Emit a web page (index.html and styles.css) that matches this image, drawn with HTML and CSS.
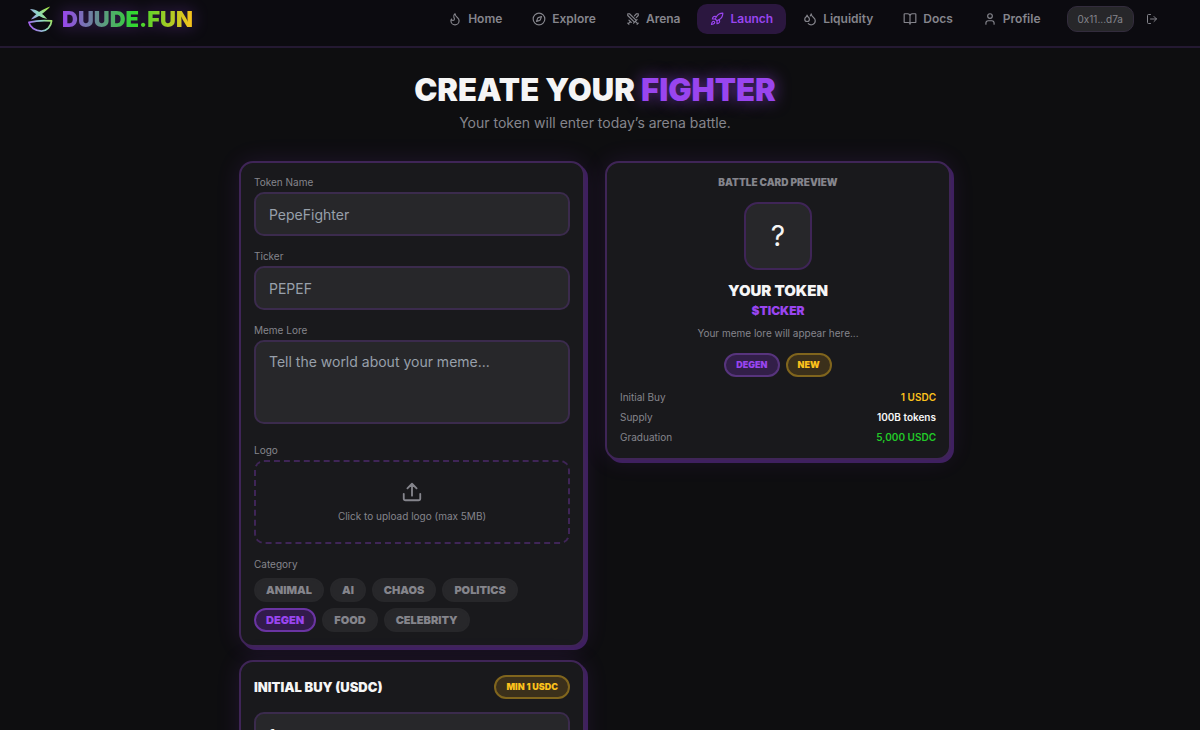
FILE: index.html
```html
<!DOCTYPE html>
<html lang="en">
<head>
  <meta charset="UTF-8">
  <meta name="viewport" content="width=device-width, initial-scale=1.0">
  <title>DUUDE.FUN - Launch</title>
  <link rel="stylesheet" href="styles.css">
</head>
<body>

<header class="header">
  <a href="#" class="logo">
    <svg class="logo-mark" viewBox="0 0 28 28">
      <defs>
        <linearGradient id="logoGradient" gradientUnits="userSpaceOnUse" x1="2" y1="20" x2="26" y2="8">
          <stop offset="0" stop-color="#a65cf0"/>
          <stop offset="0.5" stop-color="#8fd8c8"/>
          <stop offset="1" stop-color="#a6e83c"/>
        </linearGradient>
      </defs>
      <g fill="url(#logoGradient)">
        <path d="M3 3.500C10 3.500 16 8 21 14C15 12.500 8 9 3 3.500Z"/>
        <path d="M24 1C20 6 11 13 4 14.500C9 8 17 3.500 24 1Z"/>
      </g>
      <path d="M2 17.500C10 15.500 18 15.200 25.500 16C25 22 20.500 26.300 15 26.500C8.500 26.500 3 22.500 2 17.500Z" fill="none" stroke="url(#logoGradient)" stroke-width="1.800" stroke-linejoin="round"/>
    </svg>
    <span class="logo-text">DUUDE.FUN</span>
  </a>

  <nav class="nav">
    <a href="#" class="nav-link">
      <svg class="icon" viewBox="0 0 24 24"><path d="M8.500 14.500A2.500 2.500 0 0 0 11 12c0-1.380-.5-2-1-3-1.072-2.143-.224-4.054 2-6 .5 2.500 2 4.900 4 6.500 2 1.600 3 3.500 3 5.500a7 7 0 1 1-14 0c0-1.153.433-2.294 1-3a2.500 2.500 0 0 0 2.500 2.500z"/></svg>
      Home
    </a>
    <a href="#" class="nav-link">
      <svg class="icon" viewBox="0 0 24 24"><circle cx="12" cy="12" r="10"/><path d="m16.240 7.760-1.804 5.411a2 2 0 0 1-1.265 1.265L7.760 16.240l1.804-5.411a2 2 0 0 1 1.265-1.265z"/></svg>
      Explore
    </a>
    <a href="#" class="nav-link">
      <svg class="icon" viewBox="0 0 24 24"><path d="M14.500 17.500 3 6V3h3l11.500 11.500M13 19l6-6M16 16l4 4M19 21l2-2M14.500 6.500 18 3h3v3l-3.500 3.500M5 14l4 4M7 17l-3 3M3 19l2 2"/></svg>
      Arena
    </a>
    <a href="#" class="nav-link active">
      <svg class="icon" viewBox="0 0 24 24"><path d="M4.500 16.500c-1.500 1.260-2 5-2 5s3.740-.5 5-2c.71-.84.7-2.130-.09-2.910a2.180 2.180 0 0 0-2.910-.09z"/><path d="m12 15-3-3a22 22 0 0 1 2-3.950A12.880 12.880 0 0 1 22 2c0 2.720-.78 7.500-6 11a22.350 22.350 0 0 1-4 2z"/><path d="M9 12H4s.55-3.030 2-4c1.620-1.080 5 0 5 0M12 15v5s3.030-.55 4-2c1.080-1.620 0-5 0-5"/></svg>
      Launch
    </a>
    <a href="#" class="nav-link">
      <svg class="icon" viewBox="0 0 24 24"><path d="M7 16.300c2.200 0 4-1.830 4-4.050 0-1.160-.57-2.260-1.710-3.190S7.290 6.750 7 5.300c-.29 1.450-1.140 2.840-2.290 3.760S3 11.100 3 12.250c0 2.220 1.800 4.050 4 4.050z"/><path d="M12.560 6.600A10.970 10.970 0 0 0 14 3.020c.5 2.500 2 4.900 4 6.500s3 3.500 3 5.500a6.980 6.980 0 0 1-11.910 4.970"/></svg>
      Liquidity
    </a>
    <a href="#" class="nav-link">
      <svg class="icon" viewBox="0 0 24 24"><path d="M12 7v14M3 18a1 1 0 0 1-1-1V4a1 1 0 0 1 1-1h5a4 4 0 0 1 4 4 4 4 0 0 1 4-4h5a1 1 0 0 1 1 1v13a1 1 0 0 1-1 1h-6a3 3 0 0 0-3 3 3 3 0 0 0-3-3z"/></svg>
      Docs
    </a>
    <a href="#" class="nav-link">
      <svg class="icon" viewBox="0 0 24 24"><circle cx="12" cy="7" r="4"/><path d="M19 21v-2a4 4 0 0 0-4-4H9a4 4 0 0 0-4 4v2"/></svg>
      Profile
    </a>
  </nav>

  <div class="account">
    <button type="button" class="wallet">0x11...d7a</button>
    <button type="button" class="logout" aria-label="Disconnect">
      <svg class="icon" viewBox="0 0 24 24"><path d="M9 21H5a2 2 0 0 1-2-2V5a2 2 0 0 1 2-2h4M16 17l5-5-5-5M21 12H9"/></svg>
    </button>
  </div>
</header>

<main class="main">
  <div class="intro">
    <h1>CREATE YOUR <span class="glow">FIGHTER</span></h1>
    <p>Your token will enter today’s arena battle.</p>
  </div>

  <div class="columns">
    <form class="column">
      <section class="card fields">
        <div class="field">
          <label for="tokenName">Token Name</label>
          <input type="text" id="tokenName" class="input" placeholder="PepeFighter">
        </div>
        <div class="field">
          <label for="ticker">Ticker</label>
          <input type="text" id="ticker" class="input" placeholder="PEPEF">
        </div>
        <div class="field lore-field">
          <label for="lore">Meme Lore</label>
          <textarea id="lore" class="input" placeholder="Tell the world about your meme..."></textarea>
        </div>
        <div class="field">
          <label for="logoFile">Logo</label>
          <label class="upload" for="logoFile">
            <svg class="icon upload-icon" viewBox="0 0 24 24"><path d="M21 14v5a2 2 0 0 1-2 2H5a2 2 0 0 1-2-2v-5M17 8l-5-5-5 5M12 3v13"/></svg>
            Click to upload logo (max 5MB)
          </label>
          <input type="file" id="logoFile" accept="image/*" hidden>
        </div>
        <div class="field">
          <span class="field-title" id="categoryTitle">Category</span>
          <div class="chips" role="group" aria-labelledby="categoryTitle">
            <button type="button" class="chip">ANIMAL</button>
            <button type="button" class="chip">AI</button>
            <button type="button" class="chip">CHAOS</button>
            <button type="button" class="chip">POLITICS</button>
            <button type="button" class="chip selected" aria-pressed="true">DEGEN</button>
            <button type="button" class="chip">FOOD</button>
            <button type="button" class="chip">CELEBRITY</button>
          </div>
        </div>
      </section>

      <section class="card buy">
        <div class="buy-head">
          <label for="initialBuy" class="buy-title">INITIAL BUY (USDC)</label>
          <span class="badge gold">MIN 1 USDC</span>
        </div>
        <input type="text" id="initialBuy" class="input amount" value="1">
      </section>
    </form>

    <aside class="card preview">
      <h2>BATTLE CARD PREVIEW</h2>
      <div class="avatar">?</div>
      <h3>YOUR TOKEN</h3>
      <p class="symbol">$TICKER</p>
      <p class="lore">Your meme lore will appear here...</p>
      <div class="badges">
        <span class="badge purple">DEGEN</span>
        <span class="badge gold">NEW</span>
      </div>
      <dl class="stats">
        <div><dt>Initial Buy</dt><dd class="yellow">1 USDC</dd></div>
        <div><dt>Supply</dt><dd>100B tokens</dd></div>
        <div><dt>Graduation</dt><dd class="green">5,000 USDC</dd></div>
      </dl>
    </aside>
  </div>
</main>

</body>
</html>
```
FILE: styles.css
```css
* {
  margin: 0;
  padding: 0;
  box-sizing: border-box;
}
:root {
  --purple: #9945ef;
  --purple-line: #3f2557;
  --muted: #85858c;
  --gold: #fcc21c;
}
body {
  min-height: 100vh;
  font-family: Inter, "Liberation Sans", sans-serif;
  font-size: 14px;
  line-height: 20px;
  background: #0e0e10;
  color: #f5f5f5;
}
button, input, textarea {
  font-family: inherit;
}
button {
  cursor: pointer;
}
a {
  color: inherit;
  text-decoration: none;
}
.icon {
  width: 14px;
  height: 14px;
  flex: none;
  fill: none;
  stroke: currentColor;
  stroke-width: 2;
  stroke-linecap: round;
  stroke-linejoin: round;
}

/* Header */
.header {
  display: flex;
  align-items: center;
  padding: 4px 42px 12px 27px;
  background: #0c0b10;
  border-bottom: 2px solid #241932;
}
.logo {
  display: flex;
  align-items: center;
  gap: 8px;
  margin-right: auto;
}
.logo-mark {
  width: 27px;
  height: 28px;
}
.logo-text {
  font-size: 22px;
  font-weight: 900;
  line-height: 28px;
  background: linear-gradient(90deg, #9945ef, #2fd82f 55%, #fcc21c);
  -webkit-background-clip: text;
  background-clip: text;
  color: transparent;
  filter: drop-shadow(0 0 8px rgba(153, 69, 239, 0.4));
}
.nav {
  display: flex;
  gap: 4px;
}
.nav-link {
  display: flex;
  align-items: center;
  gap: 6px;
  padding: 5px 13px;
  border-radius: 10px;
  font-size: 12px;
  font-weight: 600;
  color: var(--muted);
}
.nav-link.active {
  background: #2b173f;
  color: var(--purple);
}
.account {
  display: flex;
  align-items: center;
  gap: 12px;
  margin-left: 13px;
}
.wallet {
  padding: 4px 10px;
  border: 1px solid #332c3d;
  border-radius: 10px;
  background: #27272a;
  color: var(--muted);
  font-size: 10px;
  line-height: 16px;
}
.logout {
  display: flex;
  border: none;
  background: none;
  color: var(--muted);
}
.logout .icon {
  width: 12px;
  height: 12px;
}

/* Page intro */
.main {
  max-width: 722px;
  margin: 0 auto;
  padding: 24px 10px 24px 0;
}
.intro {
  text-align: center;
  margin-bottom: 28px;
}
h1 {
  font-size: 31px;
  font-weight: 900;
  line-height: 36px;
}
.glow {
  color: var(--purple);
  text-shadow: 0 0 16px rgba(153, 69, 239, 0.6);
}
.intro p {
  margin-top: 5px;
  color: var(--muted);
}

/* Cards */
.columns {
  display: grid;
  grid-template-columns: 1fr 1fr;
  align-items: start;
  gap: 20px;
}
.column {
  display: grid;
  gap: 13px;
}
.card {
  padding: 13px;
  border: 2px solid var(--purple-line);
  border-radius: 14px;
  background: #19191c;
  box-shadow: 3px 3px 0 #3f2060, 0 0 24px rgba(153, 69, 239, 0.12);
}

/* Form */
.fields {
  display: grid;
  gap: 14px;
}
.field {
  display: grid;
  gap: 3px;
}
.field label, .field-title {
  font-size: 10px;
  line-height: 13px;
  color: var(--muted);
}
.lore-field {
  padding-bottom: 6px;
}
.input {
  width: 100%;
  height: 44px;
  padding: 0 13px;
  border: 2px solid #3b2b4d;
  border-radius: 10px;
  background: #27272a;
  color: #f5f5f5;
  font-size: 14px;
  line-height: 20px;
}
.input::placeholder {
  color: #98a0ab;
}
textarea.input {
  display: block;
  height: 84px;
  padding: 10px 13px;
  resize: none;
}
.field .upload {
  display: flex;
  flex-direction: column;
  align-items: center;
  justify-content: center;
  gap: 7px;
  height: 84px;
  border: 2px dashed var(--purple-line);
  border-radius: 10px;
  cursor: pointer;
}
.upload-icon {
  width: 22px;
  height: 22px;
}
.chips {
  display: flex;
  flex-wrap: wrap;
  gap: 6px;
  padding-top: 4px;
}
.chip {
  padding: 0 10px;
  border: 2px solid #27272a;
  border-radius: 12px;
  background: #27272a;
  color: var(--muted);
  font-size: 11px;
  font-weight: 900;
  line-height: 20px;
}
.chip.selected {
  border-color: #6a34a2;
  background: #321b4b;
  color: var(--purple);
}
.buy-head {
  display: flex;
  align-items: center;
  justify-content: space-between;
  margin-bottom: 13px;
}
.buy-title {
  font-size: 13px;
  font-weight: 900;
}
.amount {
  font-weight: 700;
}

/* Badges */
.badge {
  padding: 0 10px;
  border: 2px solid;
  border-radius: 12px;
  font-size: 9px;
  font-weight: 900;
  line-height: 20px;
}
.badge.purple {
  border-color: #57347d;
  background: #321f48;
  color: var(--purple);
}
.badge.gold {
  border-color: #80651d;
  background: #3b301b;
  color: var(--gold);
}

/* Preview */
.preview {
  padding-bottom: 11px;
  text-align: center;
}
.preview h2 {
  font-size: 10px;
  font-weight: 900;
  line-height: 13px;
  color: var(--muted);
}
.avatar {
  display: flex;
  align-items: center;
  justify-content: center;
  width: 68px;
  height: 68px;
  margin: 13px auto 11px;
  border: 2px solid var(--purple-line);
  border-radius: 14px;
  background: #27272a;
  font-size: 28px;
}
.preview h3 {
  font-size: 15px;
  font-weight: 900;
  line-height: 20px;
}
.symbol {
  font-size: 12px;
  font-weight: 900;
  color: var(--purple);
}
.lore {
  margin: 2px 0 10px;
  font-size: 10px;
  color: var(--muted);
}
.badges {
  display: flex;
  justify-content: center;
  gap: 6px;
}
.stats {
  margin-top: 10px;
  font-size: 10px;
}
.stats div {
  display: flex;
  justify-content: space-between;
}
.stats dt {
  color: var(--muted);
}
.stats dd {
  font-weight: 600;
}
.stats .yellow {
  color: var(--gold);
}
.stats .green {
  color: #22c928;
}
```
